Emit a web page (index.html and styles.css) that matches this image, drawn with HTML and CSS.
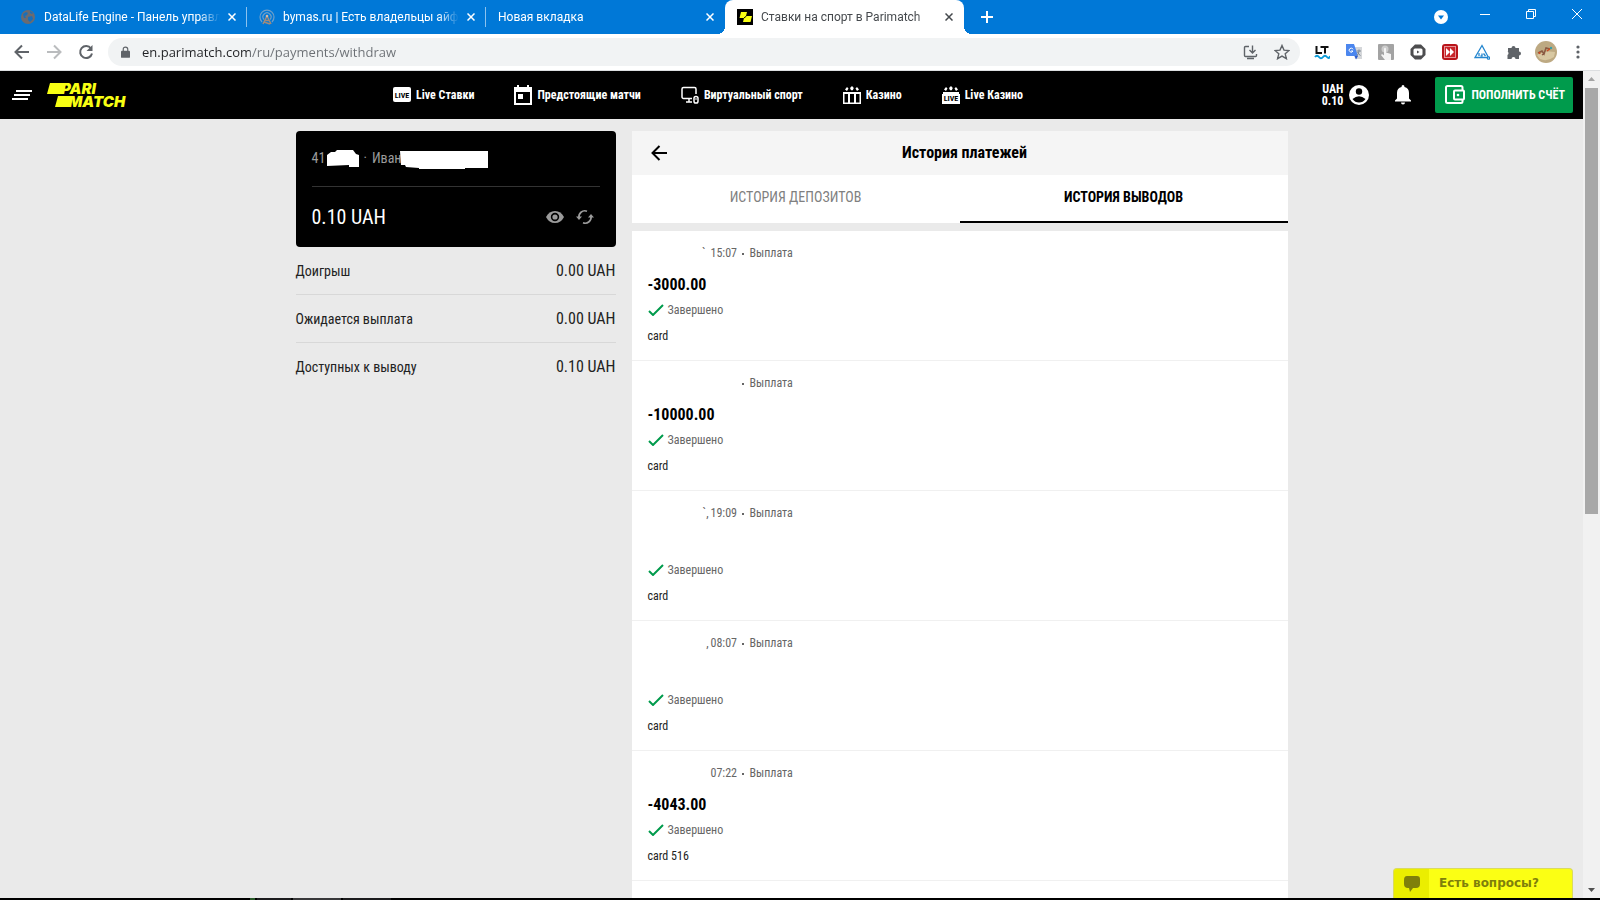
FILE: index.html
```html
<!DOCTYPE html>
<html lang="ru">
<head>
  <meta charset="UTF-8">
  <meta name="viewport" content="width=device-width, initial-scale=1.0">
  <title>Ставки на спорт в Parimatch</title>
  <link rel="stylesheet" href="styles.css">
</head>
<body>
  <!-- Browser tabs -->
  <div class="tab-strip">
    <div class="tab">
      <svg class="favicon" viewBox="0 0 16 16"><circle cx="8" cy="8" r="7" fill="#6b6b70"/><path d="M3 5l3-2 2 1-1 2-2 1 1 2-2 0zM8 8l4-1 1 3-3 3-2-2zM10 2l3 2-1 1-2-1z" fill="#1a6fb8"/></svg>
      <span class="tab-title">DataLife Engine - Панель управления</span>
      <button class="tab-close" aria-label="Закрыть"><svg viewBox="0 0 8 8"><path d="M0.5 0.5l7 7M7.500 0.5l-7 7"/></svg></button>
    </div>
    <div class="tab">
      <svg class="favicon" viewBox="0 0 16 16" fill="none" stroke="#6f9fc8"><path d="M3 13a7 7 0 1 1 10 0M5 10.500a4 4 0 1 1 6 0" stroke-width="1.200"/><path d="M8 7L4 15M8 7l4 8M6 11.500h4M5 13l6 2" stroke="#a08b7c" stroke-width="1.500"/><circle cx="8" cy="7" r="1.300" fill="#d8b8a0" stroke="none"/></svg>
      <span class="tab-title">bymas.ru | Есть владельцы айфонов</span>
      <button class="tab-close" aria-label="Закрыть"><svg viewBox="0 0 8 8"><path d="M0.5 0.5l7 7M7.500 0.5l-7 7"/></svg></button>
    </div>
    <div class="tab">
      <span class="tab-title">Новая вкладка</span>
      <button class="tab-close" aria-label="Закрыть"><svg viewBox="0 0 8 8"><path d="M0.5 0.5l7 7M7.500 0.5l-7 7"/></svg></button>
    </div>
    <div class="tab active">
      <svg class="favicon" viewBox="0 0 16 16"><path d="M0 0h16v16H0z" fill="#000"/><path d="M4 3h6l-1 4h6l-1.500 6H6l1-4H2.500z" fill="#f8ff13"/><path d="M9.500 7L7 9" stroke="#000"/></svg>
      <span class="tab-title">Ставки на спорт в Parimatch</span>
      <button class="tab-close" aria-label="Закрыть"><svg viewBox="0 0 8 8"><path d="M0.5 0.5l7 7M7.500 0.5l-7 7"/></svg></button>
    </div>
    <button class="new-tab" aria-label="Новая вкладка"><svg viewBox="0 0 12 12"><path d="M6 0v12M0 6h12"/></svg></button>
    <div class="window-controls">
      <button aria-label="Поиск вкладок"><svg class="drop" viewBox="0 0 14 14"><circle cx="7" cy="7" r="7" fill="#fff"/><path d="M4 5.500h6L7 9.500z" fill="#0078d7"/></svg></button>
      <button aria-label="Свернуть"><svg viewBox="0 0 10 10"><path d="M0 5.500h10"/></svg></button>
      <button aria-label="Восстановить"><svg viewBox="0 0 10 10"><path d="M.5 2.500h7v7h-7zM2.500 2.500v-2h7v7h-2"/></svg></button>
      <button aria-label="Закрыть окно"><svg viewBox="0 0 10 10"><path d="M0 0l10 10M10 0L0 10"/></svg></button>
    </div>
  </div>

  <!-- Address bar -->
  <div class="toolbar">
    <button class="tool" aria-label="Назад"><svg viewBox="0 0 16 16" fill="none" stroke="#5f6368" stroke-width="2"><path d="M15 8H2M8 1.500L1.500 8 8 14.500"/></svg></button>
    <button class="tool" aria-label="Вперёд"><svg viewBox="0 0 16 16" fill="none" stroke="#babcbe" stroke-width="2"><path d="M1 8h13M8 1.500L14.500 8 8 14.500"/></svg></button>
    <button class="tool" aria-label="Обновить"><svg viewBox="0 0 16 16" fill="none" stroke="#5f6368" stroke-width="2"><path d="M13 4.500A6 6 0 1 0 14 9.500"/><path d="M14.500 1v6h-6z" fill="#5f6368" stroke="none"/></svg></button>
    <div class="omnibox">
      <svg class="lock" viewBox="0 0 10 13"><path d="M1 5h8a1 1 0 0 1 1 1v6a1 1 0 0 1-1 1H1a1 1 0 0 1-1-1V6a1 1 0 0 1 1-1z" fill="#5f6368"/><path d="M2.500 6V3.500a2.500 2.500 0 0 1 5 0V6" fill="none" stroke="#5f6368" stroke-width="1.300"/></svg>
      <input class="url" type="text" aria-label="Адрес" value="en.parimatch.com/ru/payments/withdraw">
      <button class="tool" aria-label="Установить"><svg viewBox="0 0 16 16" fill="none" stroke="#5f6368" stroke-width="1.400"><path d="M7 2.500H3.500a1 1 0 0 0-1 1v8a1 1 0 0 0 1 1h10a1 1 0 0 0 1-1V10M5 14.500h7M10.500 1.500v7M7.500 6l3 3 3-3"/></svg></button>
      <button class="tool" aria-label="В закладки"><svg viewBox="0 0 16 16" fill="none" stroke="#5f6368" stroke-width="1.400"><path d="M8 1.500l2 4.600 5 .4-3.800 3.300 1.200 4.900L8 12.100l-4.400 2.600 1.200-4.900L1 6.500l5-.4z"/></svg></button>
    </div>
    <button class="tool" aria-label="LanguageTool"><svg viewBox="0 0 16 16" fill="none"><path d="M2.500 2v7H8M6.500 3h8M11 3v6.500" stroke="#111" stroke-width="2"/><path d="M1 13q2-2.500 4 0t4 0 4 0 3-1" stroke="#0a9ad7" stroke-width="2"/></svg></button>
    <button class="tool" aria-label="Переводчик"><svg viewBox="0 0 16 16"><path d="M7 3h9v12H9z" fill="#d5d7da"/><path d="M0 0h8l4 12H1a1 1 0 0 1-1-1z" fill="#4b86ee"/><path d="M8.500 12H12l-2 3.500z" fill="#2a5bd0"/><path d="M7 5.300A2 2 0 1 0 7 7H5" stroke="#fff" fill="none"/><path d="M10.500 7h4.500M13 5.500V7q0 3-2.500 5M11.500 8q1 2.500 3 3.500" stroke="#7c8794" fill="none"/></svg></button>
    <button class="tool" aria-label="Жесты"><svg viewBox="0 0 16 16"><rect width="16" height="16" rx="1" fill="#a3a3a3"/><circle cx="7" cy="5" r="3.500" fill="#ccc"/><path d="M6 4.500q1-1.500 2 0v4l5 1.500v6H7l-4-5q1-1.500 3 .5z" fill="#f4f4f4"/></svg></button>
    <button class="tool" aria-label="Видео"><svg viewBox="0 0 16 16"><path d="M5 0.500h6L15.500 5v6L11 15.500H5L0.500 11V5z" fill="#4d4d4f"/><rect x="3.500" y="4.500" width="9" height="7" rx="1.500" fill="#fff"/><path d="M7 6.500v3L9.500 8z" fill="#4d4d4f"/></svg></button>
    <button class="tool" aria-label="Перемотка"><svg viewBox="0 0 16 16"><rect x="1" y="1" width="14" height="14" rx="2" fill="#fff" stroke="#b8141a" stroke-width="2"/><rect x="2.500" y="2.500" width="11" height="11" fill="#c9252a"/><path d="M4 4l4 4-4 4zM8 4l4 4-4 4z" fill="#fff"/></svg></button>
    <button class="tool" aria-label="Треугольник"><svg viewBox="0 0 16 16" fill="none" stroke="#2486cf" stroke-width="1.300"><path d="M8 1.500l6.500 12H1z"/><path d="M5 9v3M8 9.500v2.500H6.500M9.500 9.500l2 2.500"/><circle cx="14.500" cy="14" r="1.200" fill="#fff"/></svg></button>
    <button class="tool" aria-label="Расширения"><svg viewBox="0 0 16 16"><path d="M2 4h3.500a2 2 0 1 1 4 0H13v3.500a2 2 0 1 1 0 4V15H9.500a2 2 0 0 0-4 0H1.500v-4a2 2 0 0 0 0-3.500H2z" fill="#5f6368"/></svg></button>
    <button class="tool" aria-label="Профиль"><svg class="profile" viewBox="0 0 22 22"><circle cx="11" cy="11" r="11" fill="#bda982"/><path d="M2 14q8-5 18-3l-1 5q-7 5-14 2z" fill="#d8c8a2"/><path d="M3 12l4-2 2 3 2-6 4 1M7 14l3-2" stroke="#8a5a42" stroke-width="1.500" fill="none"/><path d="M4 11l1 2M12 10l4-3" stroke="#d2491f" stroke-width="1.500"/><circle cx="16" cy="7" r="1.200" fill="#35a0a8"/></svg></button>
    <button class="tool" aria-label="Меню"><svg viewBox="0 0 16 16" fill="#5f6368"><circle cx="8" cy="3" r="1.600"/><circle cx="8" cy="8" r="1.600"/><circle cx="8" cy="13" r="1.600"/></svg></button>
  </div>

  <div class="viewport">
    <div class="page">
      <header class="site-header">
        <button class="burger" aria-label="Меню"><svg viewBox="0 0 20 10"><path d="M4 1h16M2 5h16M0 9h16" stroke="#fff" stroke-width="2"/></svg></button>
        <a class="logo" href="#" aria-label="Parimatch">
          <svg viewBox="0 0 82 24" fill="#f8ff13"><path d="M3 0h16l-3 11H0zM11 13h15l-3 11H8z"/><text x="14" y="11">PARI</text><text x="21" y="24">MATCH</text></svg>
        </a>
        <nav class="main-nav">
          <a href="#"><svg viewBox="0 0 18 18"><rect y="1" width="18" height="15" rx="2" fill="#fff"/><text class="live" x="9" y="12">LIVE</text></svg>Live Ставки</a>
          <a href="#"><svg viewBox="0 0 18 20"><path d="M0 2h3V0h2v2h8V0h2v2h3v18H0zM2 7v11h14V7z" fill="#fff" fill-rule="evenodd"/><path d="M4 9h5v5H4z" fill="#fff"/></svg>Предстоящие матчи</a>
          <a href="#"><svg viewBox="0 0 18 18" fill="none" stroke="#fff" stroke-width="1.500"><path d="M15 8V3a1.500 1.500 0 0 0-1.500-1.500h-11A1.500 1.500 0 0 0 1 3v8a1.500 1.500 0 0 0 1.500 1.500H11M5 16h6M8 12.500V16"/><rect x="13" y="10.500" width="4" height="6.500" rx="1.800"/><path d="M15 12v2" stroke-width="1"/></svg>Виртуальный спорт</a>
          <a href="#"><svg viewBox="0 0 18 18" fill="#fff"><path d="M4 1l1.500 1.500L4 5 2 3.500zM9 0l1.800 2-1 2.200H8l-1-2.200zM14 1l2 2.500L14 5l-1.500-2.500z"/><path d="M0 6h18v12H0zM1.500 8v8.500H5V8zM7 8v8.500h4V8zM13 8v8.500h3.500V8z" fill-rule="evenodd"/></svg>Казино</a>
          <a href="#"><svg viewBox="0 0 18 18" fill="#fff"><path d="M4 1l1.500 1.500L4 5 2 3.500zM9 0l1.800 2-1 2.200H8l-1-2.200zM14 1l2 2.500L14 5l-1.500-2.500z"/><path d="M1 6h16v2h1v10H0V8h1z"/><text class="live" x="9" y="15">LIVE</text></svg>Live Казино</a>
        </nav>
        <div class="account">
          <a class="balance" href="#"><span>UAH<br>0.10</span>
            <svg viewBox="0 0 20 20"><circle cx="10" cy="10" r="10" fill="#fff"/><circle cx="10" cy="6.500" r="3.200" fill="#000"/><path d="M3.500 14q6.500-5.500 13 0-2.500 3.500-6.500 3.500T3.500 14z" fill="#000"/></svg>
          </a>
          <button class="bell" aria-label="Уведомления"><svg viewBox="0 0 16 20" fill="#fff"><path d="M8 0q1.500 0 1.500 2 4.500 1 4.500 6v5.500l2 2v1H0v-1l2-2V8q0-5 4.500-6Q6.500 0 8 0zM6 17.500h4q0 2-2 2t-2-2z"/></svg></button>
          <button class="deposit"><svg viewBox="0 0 20 20" fill="none" stroke="#fff" stroke-width="2"><path d="M17.500 5V2.500q0-1.500-1.500-1.500H2.500Q1 1 1 2.500v14Q1 18 2.500 18H16q1.500 0 1.500-1.500V15"/><rect x="9" y="5.500" width="10" height="9" rx="1"/><circle cx="13" cy="10" r="1.300" fill="#fff" stroke="none"/></svg>ПОПОЛНИТЬ СЧЁТ</button>
        </div>
      </header>

      <main class="container">
        <aside class="sidebar">
          <section class="wallet">
            <p class="wallet-user">
              <span class="user-id">41<svg class="mask-id" viewBox="0 0 32 17"><path d="M0 16V5l4-3h4l2-2h16l3 4 3 1v12H22v-2z" fill="#fff"/></svg></span>
              <span>·</span>
              <span class="user-name">Иван<svg class="mask-name" viewBox="0 0 88 18"><path d="M0 0h88v17H65v1H19v-1L6 16l-1-2H1z" fill="#fff"/></svg></span>
            </p>
            <div class="wallet-total">
              <strong>0.10 UAH</strong>
              <button aria-label="Скрыть баланс"><svg viewBox="0 0 18 18"><path d="M0 9q3-6 9-6t9 6q-3 6-9 6T0 9z" fill="#9b9b9b"/><circle cx="9" cy="9" r="3.400" fill="#9b9b9b" stroke="#000" stroke-width="1.600"/></svg></button>
              <button aria-label="Обновить баланс"><svg viewBox="0 0 18 18" fill="none" stroke="#9b9b9b" stroke-width="1.700"><path d="M3 10a6 6 0 0 1 8-6.800M15 8a6 6 0 0 1-8 6.800"/><path d="M0 8.500h6L3 12zM18 9.500h-6L15 6z" fill="#9b9b9b" stroke="none"/></svg></button>
            </div>
          </section>
          <dl class="funds">
            <div><dt>Доигрыш</dt><dd>0.00 UAH</dd></div>
            <div><dt>Ожидается выплата</dt><dd>0.00 UAH</dd></div>
            <div><dt>Доступных к выводу</dt><dd>0.10 UAH</dd></div>
          </dl>
        </aside>

        <section class="history">
          <div class="history-head">
            <button aria-label="Назад"><svg viewBox="0 0 16 16" fill="none" stroke="#000" stroke-width="2"><path d="M16 8H2M8.500 1L1.500 8l7 7"/></svg></button>
            <h1>История платежей</h1>
          </div>
          <div class="history-tabs">
            <button>ИСТОРИЯ ДЕПОЗИТОВ</button>
            <button class="selected">ИСТОРИЯ ВЫВОДОВ</button>
          </div>
          <ul class="payments">
            <li>
              <p class="meta"><span class="date">`&nbsp;</span><time>15:07</time><span class="dot"></span>Выплата</p>
              <p class="amount">-3000.00</p>
              <p class="status"><svg viewBox="0 0 16 12"><path d="M1 7l4 4L15 1"/></svg>Завершено</p>
              <p class="method">card</p>
            </li>
            <li>
              <p class="meta"><span class="date"></span><time></time><span class="dot"></span>Выплата</p>
              <p class="amount">-10000.00</p>
              <p class="status"><svg viewBox="0 0 16 12"><path d="M1 7l4 4L15 1"/></svg>Завершено</p>
              <p class="method">card</p>
            </li>
            <li>
              <p class="meta"><span class="date">`,</span><time>19:09</time><span class="dot"></span>Выплата</p>
              <p class="amount"></p>
              <p class="status"><svg viewBox="0 0 16 12"><path d="M1 7l4 4L15 1"/></svg>Завершено</p>
              <p class="method">card</p>
            </li>
            <li>
              <p class="meta"><span class="date">,</span><time>08:07</time><span class="dot"></span>Выплата</p>
              <p class="amount"></p>
              <p class="status"><svg viewBox="0 0 16 12"><path d="M1 7l4 4L15 1"/></svg>Завершено</p>
              <p class="method">card</p>
            </li>
            <li>
              <p class="meta"><span class="date"></span><time>07:22</time><span class="dot"></span>Выплата</p>
              <p class="amount">-4043.00</p>
              <p class="status"><svg viewBox="0 0 16 12"><path d="M1 7l4 4L15 1"/></svg>Завершено</p>
              <p class="method">card 516</p>
            </li>
            <li></li>
          </ul>
        </section>
      </main>

      <button class="chat">
        <span class="chat-icon"><svg viewBox="0 0 16 16"><path d="M3 0h10q3 0 3 3v5q0 4-4 4H9l-3 4-1-4H4Q0 12 0 8V4q0-4 3-4z" fill="#7f7f0b"/></svg></span>
        <span class="chat-text">Есть вопросы?</span>
      </button>
    </div>

    <div class="scrollbar">
      <svg viewBox="0 0 17 17"><path d="M5 10h7L8.500 6z" fill="#a3a3a3"/></svg>
      <div class="thumb"></div>
      <svg viewBox="0 0 17 17"><path d="M5 7h7l-3.500 4z" fill="#505050"/></svg>
    </div>
  </div>

  <div class="taskbar"><i class="green"></i><i class="dark"></i><i class="light"></i><i class="dark"></i></div>
</body>
</html>
```
FILE: styles.css
```css
* {
  box-sizing: border-box;
}
body {
  margin: 0;
  height: 100vh;
  display: flex;
  flex-direction: column;
  overflow: hidden;
  font-family: "Roboto Condensed", "Liberation Sans Narrow", Roboto, sans-serif;
  background-color: #eaeaea;
}
button {
  padding: 0;
  border: none;
  background: none;
  font-family: inherit;
  color: inherit;
}
p, h1, ul, dl, dd {
  margin: 0;
  padding: 0;
}
a {
  color: inherit;
  text-decoration: none;
}
svg {
  display: block;
  flex: none;
}

/* browser tabs */
.tab-strip {
  display: flex;
  flex: none;
  height: 34px;
  padding-left: 8px;
  background-color: #0078d7;
  color: #fff;
  font-family: Roboto, "Open Sans", sans-serif;
  font-size: 12px;
}
.tab {
  position: relative;
  display: flex;
  align-items: center;
  flex: 0 1 239px;
  min-width: 0;
  padding: 0 11px 0 12px;
}
.tab:nth-child(-n+2)::after {
  content: "";
  position: absolute;
  right: 0;
  top: 7px;
  height: 20px;
  border-right: 1px solid #8cc2ee;
}
.tab.active {
  background-color: #fff;
  color: #45494d;
  border-radius: 8px 8px 0 0;
}
.tab.active::before, .tab.active::after {
  content: "";
  position: absolute;
  bottom: 0;
  width: 8px;
  height: 8px;
  background: radial-gradient(circle at 0 0, #0078d7 8px, #fff 8px);
}
.tab.active::before {
  left: -8px;
}
.tab.active::after {
  right: -8px;
  background: radial-gradient(circle at 100% 0, #0078d7 8px, #fff 8px);
}
.favicon {
  width: 16px;
  height: 16px;
  margin-right: 8px;
}
.tab-title {
  flex: 1;
  overflow: hidden;
  white-space: nowrap;
  margin-right: 8px;
  -webkit-mask-image: linear-gradient(to right, #000 88%, transparent);
  mask-image: linear-gradient(to right, #000 88%, transparent);
}
.tab-close svg {
  width: 8px;
  height: 8px;
}
.tab-close svg, .new-tab svg {
  fill: none;
  stroke: currentColor;
  stroke-width: 2;
}
.tab-close svg {
  stroke-width: 1.5;
}
.new-tab {
  margin-left: 17px;
}
.new-tab svg {
  width: 12px;
  height: 12px;
}
.window-controls {
  display: flex;
  height: 28px;
  margin-left: auto;
}
.window-controls button {
  width: 46px;
  display: flex;
  align-items: center;
  justify-content: center;
}
.window-controls svg {
  width: 10px;
  height: 10px;
  fill: none;
  stroke: #fff;
}
.window-controls .drop {
  width: 14px;
  height: 14px;
  margin: 6px 0 0 4px;
  stroke: none;
}

/* address bar */
.toolbar {
  display: flex;
  align-items: center;
  flex: none;
  height: 37px;
  padding: 0 6px;
  background-color: #fff;
  border-bottom: 1px solid #dcdee0;
}
.tool {
  width: 32px;
  height: 32px;
  display: flex;
  align-items: center;
  justify-content: center;
}
.tool svg {
  width: 16px;
  height: 16px;
}
.tool .profile {
  width: 22px;
  height: 22px;
}
.omnibox {
  display: flex;
  align-items: center;
  flex: 1;
  height: 28px;
  margin: 0 6px;
  padding: 0 2px 0 13px;
  border-radius: 14px;
  background-color: #f1f3f4;
}
.lock {
  width: 9px;
  height: 12px;
}
.url {
  flex: 1;
  min-width: 0;
  margin-left: 12px;
  padding: 0;
  border: none;
  font-family: "Open Sans", "Noto Sans", sans-serif;
  font-size: 13px;
  color: transparent;
  background: linear-gradient(to right, #202124 108px, #6b6f74 108px);
  -webkit-background-clip: text;
  background-clip: text;
}

/* page area */
.viewport {
  display: flex;
  flex: 1;
  min-height: 0;
}
.page {
  position: relative;
  flex: 1;
  min-width: 0;
  overflow: hidden;
}
.scrollbar {
  display: flex;
  flex-direction: column;
  flex: none;
  width: 17px;
  background-color: #f1f1f1;
}
.scrollbar svg {
  width: 17px;
  height: 17px;
}
.thumb {
  height: 426px;
  margin: 0 2px auto;
  background-color: #a8a8a8;
}
.taskbar {
  display: flex;
  flex: none;
  gap: 2px;
  height: 2px;
  padding-left: 250px;
  background-color: #000;
}
.taskbar i {
  width: 48px;
  background-color: #1c1c1e;
}
.taskbar .green {
  width: 5px;
  background-color: #2a5a2a;
}
.taskbar .green + .dark {
  width: 34px;
}
.taskbar .light {
  background-color: #38383a;
}

/* site header */
.site-header {
  display: flex;
  align-items: center;
  height: 48px;
  padding: 0 10px 0 12px;
  background-color: #000;
  color: #fff;
  font-size: 12px;
  font-weight: bold;
}
.burger svg {
  width: 20px;
  height: 10px;
}
.logo {
  margin-left: 15px;
}
.logo svg {
  width: 82px;
  height: 24px;
  overflow: visible;
}
.logo text {
  font: italic 900 15px Inter, sans-serif;
}
.main-nav {
  display: flex;
  gap: 40px;
  margin-left: 264px;
}
.main-nav a {
  display: flex;
  align-items: center;
  gap: 5px;
  white-space: nowrap;
}
.main-nav svg {
  width: 18px;
  height: 20px;
}
.main-nav .live {
  font-size: 8px;
  fill: #000;
  text-anchor: middle;
}
.account {
  display: flex;
  align-items: center;
  margin-left: auto;
}
.balance {
  display: flex;
  align-items: center;
  gap: 6px;
  line-height: 12px;
  text-align: right;
}
.balance svg {
  width: 20px;
  height: 20px;
}
.bell {
  margin: 0 24px 0 26px;
}
.bell svg {
  width: 16px;
  height: 20px;
}
.deposit {
  display: flex;
  align-items: center;
  gap: 6px;
  height: 36px;
  padding: 0 8px 0 10px;
  border-radius: 2px;
  background-color: #009b4c;
  color: #fff;
  font-size: 12px;
  font-weight: bold;
  white-space: nowrap;
}
.deposit svg {
  width: 20px;
  height: 20px;
}

.container {
  display: flex;
  gap: 16px;
  max-width: 992px;
  margin: 0 auto;
  padding-top: 12px;
}
.sidebar {
  flex: 0 0 320px;
}

/* balance card */
.wallet {
  height: 116px;
  padding: 0 16px;
  border-radius: 4px;
  background-color: #000;
  color: #fff;
}
.wallet-user {
  display: flex;
  height: 56px;
  border-bottom: 1px solid #333;
  color: #9b9b9b;
  font-size: 14px;
  line-height: 54px;
}
.wallet-user > span {
  position: relative;
}
.user-id {
  width: 52px;
}
.user-name {
  margin-left: 5px;
}
.mask-id {
  position: absolute;
  left: 15px;
  top: 19px;
  width: 32px;
  height: 17px;
}
.mask-name {
  position: absolute;
  left: 28px;
  top: 20px;
  width: 88px;
  height: 18px;
}
.wallet-total {
  display: flex;
  align-items: center;
  gap: 12px;
  height: 60px;
  padding-right: 6px;
}
.wallet-total strong {
  flex: 1;
  font-size: 20px;
  font-weight: normal;
}
.wallet-total svg {
  width: 18px;
  height: 18px;
}
.funds div {
  display: flex;
  align-items: center;
  justify-content: space-between;
  height: 48px;
  border-bottom: 1px solid #d8d8d8;
  color: #222;
}
.funds div:last-child {
  border-color: transparent;
}
.funds dt {
  font-size: 14px;
  line-height: 16px;
}
.funds dd {
  font-size: 16px;
}

/* payment history */
.history {
  flex: 1;
}
.history-head {
  display: flex;
  align-items: center;
  height: 44px;
  padding: 0 19px;
  background-color: #f5f5f5;
}
.history-head svg {
  width: 16px;
  height: 16px;
}
.history-head h1 {
  flex: 1;
  margin-right: 6px;
  padding-bottom: 2px;
  font-size: 16px;
  text-align: center;
}
.history-tabs {
  display: flex;
  height: 48px;
  background-color: #fff;
}
.history-tabs button {
  flex: 1;
  padding-bottom: 2px;
  border-bottom: 2px solid transparent;
  font-size: 14px;
  color: #808080;
}
.history-tabs .selected {
  border-color: #000;
  font-weight: bold;
  color: #000;
}
.payments {
  margin-top: 8px;
  list-style: none;
  background-color: #fff;
  font-size: 12px;
  line-height: 16px;
}
.payments li {
  height: 130px;
  padding: 14px 16px 0;
  border-bottom: 1px solid #f0f0f0;
}
.meta {
  display: flex;
  height: 16px;
  color: #666;
}
.date {
  width: 63px;
  padding-right: 2px;
  text-align: right;
}
.meta time {
  width: 26px;
}
.dot {
  width: 2px;
  height: 2px;
  margin: 8px 6px 0 5px;
  background-color: #666;
}
.amount {
  height: 24px;
  margin-top: 12px;
  font-size: 16px;
  font-weight: bold;
  line-height: 24px;
}
.status {
  display: flex;
  align-items: center;
  gap: 4px;
  margin-top: 5px;
  color: #666;
}
.status svg {
  width: 16px;
  height: 12px;
  fill: none;
  stroke: #009b4c;
  stroke-width: 2;
}
.method {
  margin-top: 10px;
  color: #222;
}

/* chat button */
.chat {
  position: absolute;
  right: 10px;
  bottom: 0;
  display: flex;
  width: 180px;
  height: 30px;
  border: 1px solid #dada60;
  border-bottom: none;
  border-radius: 4px 4px 0 0;
  overflow: hidden;
  background-color: #fbff14;
  color: #7f7f0b;
}
.chat-icon {
  display: flex;
  align-items: center;
  justify-content: center;
  width: 35px;
  height: 100%;
  background-color: #ebee00;
}
.chat-icon svg {
  width: 16px;
  height: 16px;
}
.chat-text {
  padding-left: 10px;
  font: bold 12px/28px "DejaVu Sans", sans-serif;
}
```
